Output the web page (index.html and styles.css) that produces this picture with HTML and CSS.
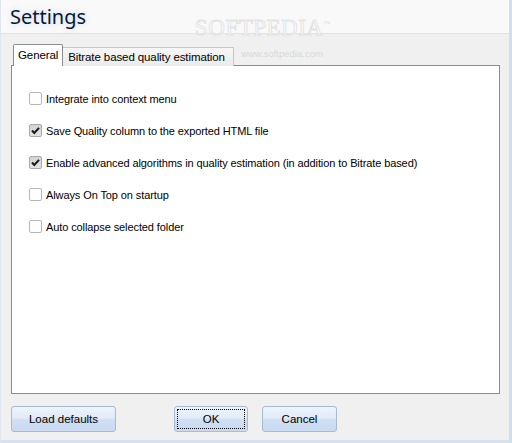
FILE: index.html
```html
<!DOCTYPE html>
<html>
<head>
<meta charset="utf-8">
<link rel="stylesheet" href="styles.css">
</head>
<body>
<div class="window">
  <div class="titlebar">
    <h1 class="title">Settings</h1>
  </div>
  <div class="content">
    <div class="tabs">
      <div class="tab active">General</div>
      <div class="tab">Bitrate based quality estimation</div>
    </div>
    <div class="panel">
      <label class="option"><span class="box"></span><span>Integrate into context menu</span></label>
      <label class="option"><span class="box checked"><svg viewBox="0 0 13 13" width="13" height="13"><path d="M3 6.5 L5.3 9 L10 3.8" fill="none" stroke="#1a1a1a" stroke-width="2"/></svg></span><span>Save Quality column to the exported HTML file</span></label>
      <label class="option"><span class="box checked"><svg viewBox="0 0 13 13" width="13" height="13"><path d="M3 6.5 L5.3 9 L10 3.8" fill="none" stroke="#1a1a1a" stroke-width="2"/></svg></span><span>Enable advanced algorithms in quality estimation (in addition to Bitrate based)</span></label>
      <label class="option"><span class="box"></span><span>Always On Top on startup</span></label>
      <label class="option"><span class="box"></span><span>Auto collapse selected folder</span></label>
    </div>
    <div class="buttons">
      <button class="btn btn-load">Load defaults</button>
      <button class="btn btn-ok"><span class="focus">OK</span></button>
      <button class="btn btn-cancel">Cancel</button>
    </div>
  </div>
  <div class="wm-logo">SOFTPEDIA<sup>™</sup></div>
  <div class="wm-url">www.softpedia.com</div>
</div>
</body>
</html>
```
FILE: styles.css
```css
html, body {
  margin: 0;
  padding: 0;
  background: #f0f0f0;
}
.window {
  position: relative;
  width: 512px;
  height: 443px;
  box-sizing: border-box;
  border-left: 1px solid #dfe6ef;
  border-right: 3px solid #d3deec;
  border-bottom: 3px solid #d8e2ee;
  background: #f0f0f0;
  font-family: "Liberation Sans", Arial, sans-serif;
  font-size: 11px;
  color: #000;
  overflow: hidden;
}
.titlebar {
  height: 34px;
  background: #f9f9f9;
  border-bottom: 1px solid #e2e2e2;
  box-sizing: border-box;
}
.title {
  margin: 0;
  padding: 2px 0 0 9px;
  font-family: "Noto Sans", "Open Sans", sans-serif;
  font-weight: normal;
  font-size: 20px;
  line-height: 30px;
  color: #0c1830;
  text-shadow: 0 0 6px rgba(190, 215, 245, 0.9);
}
.content {
  padding: 11px 9px 0 10px;
}
.tabs {
  display: flex;
  align-items: flex-end;
  height: 21px;
  padding-left: 2px;
  margin-bottom: -1px;
  position: relative;
  z-index: 1;
}
.tab {
  height: 19px;
  line-height: 18px;
  padding: 0 8px 0 5px;
  box-sizing: border-box;
  border: 1px solid #c5c8ce;
  border-bottom: none;
  border-left: none;
  background: linear-gradient(#f6f6f6, #ebebeb);
  font-size: 11.5px;
  letter-spacing: -0.1px;
}
.tab.active {
  height: 22px;
  line-height: 21px;
  padding: 0 4px 0 4px;
  background: #fff;
  border: 1px solid #898c95;
  border-bottom: none;
  border-radius: 2px 2px 0 0;
}
.panel {
  height: 329px;
  box-sizing: border-box;
  background: #fff;
  border: 1px solid #898c95;
  padding: 26px 0 0 17px;
  display: flex;
  flex-direction: column;
  gap: 19px;
}
.option {
  display: flex;
  align-items: center;
  gap: 4px;
  height: 13px;
  font-size: 11px;
  letter-spacing: -0.1px;
}
.box {
  width: 13px;
  height: 13px;
  box-sizing: border-box;
  border: 1px solid #b6b6b6;
  border-radius: 2px;
  background: #fff;
  flex: none;
  display: flex;
}
.box.checked {
  background: linear-gradient(#d2d2d2, #e4e4e4);
  border-color: #a9a9a9;
}
.box svg {
  margin: -1px;
}
.buttons {
  display: flex;
  margin-top: 12px;
}
.btn {
  height: 26px;
  box-sizing: border-box;
  border: 1px solid #a7bad4;
  border-radius: 3px;
  background: linear-gradient(#eef3fb 0%, #e2ebf8 45%, #cfdef3 55%, #c9daf2 100%);
  font-family: "Liberation Sans", Arial, sans-serif;
  font-size: 11.5px;
  color: #000;
  padding: 0;
}
.btn-load {
  width: 105px;
}
.btn-ok {
  width: 74px;
  margin-left: 58px;
  padding: 2px;
  display: flex;
}
.btn-ok .focus {
  flex: 1;
  border: 1px dotted #000;
  display: flex;
  align-items: center;
  justify-content: center;
}
.btn-cancel {
  width: 75px;
  margin-left: 14px;
}
.wm-logo {
  position: absolute;
  left: 194px;
  top: 15px;
  font-family: "Liberation Serif", serif;
  font-size: 23px;
  letter-spacing: 0.5px;
  color: #fcfcfc;
  -webkit-text-stroke: 1px #e4e4e4;
}
.wm-logo sup {
  font-size: 7px;
  -webkit-text-stroke: 0;
  color: #dcdcdc;
  letter-spacing: 0;
}
.wm-url {
  position: absolute;
  left: 240px;
  top: 48px;
  font-size: 9.5px;
  color: #dadada;
  z-index: 2;
}
```
